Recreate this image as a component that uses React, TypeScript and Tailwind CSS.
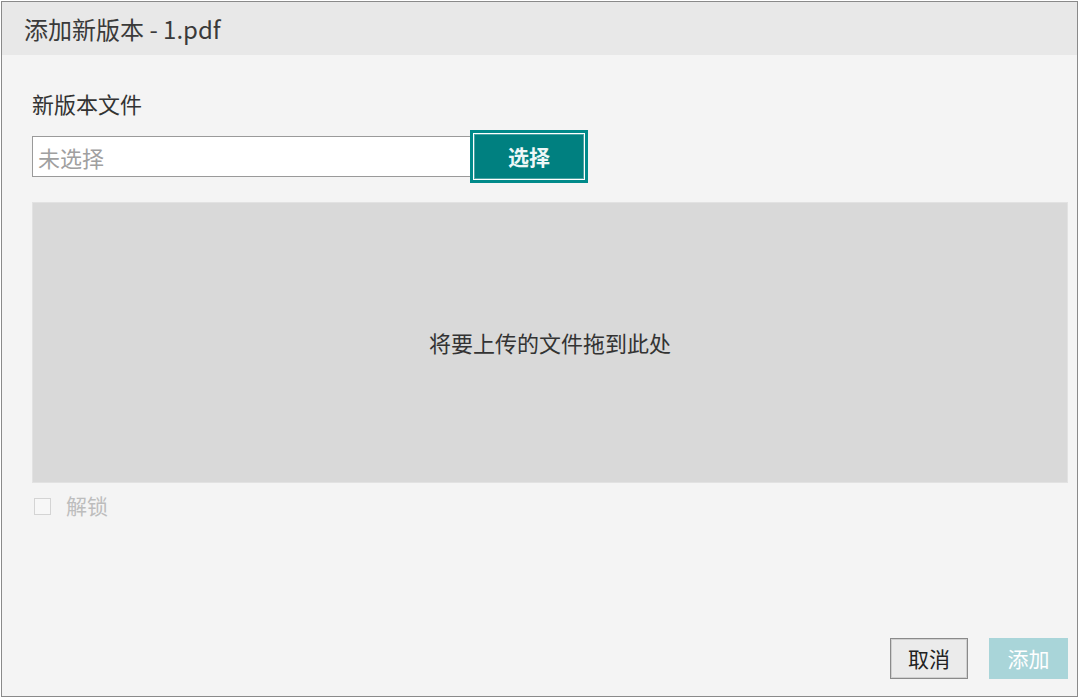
export default function App() {
  return (
    <div className="h-[698px] w-[1079px] bg-white pl-px pt-px font-['Noto_Sans_CJK_SC','Noto_Sans',sans-serif]">
      <div className="flex h-[696px] w-[1077px] flex-col border border-[#8a8a8a] bg-[#f4f4f4]">
        <div className="flex h-[53px] shrink-0 items-center bg-[#e8e8e8] pl-[22px] text-[24px] text-[#3a3a3a]">
          添加新版本 - 1.pdf
        </div>

        <div className="flex flex-1 flex-col pb-[17px] pl-[30px] pr-[9px] pt-[33px]">
          <div className="text-[22px] leading-[30px] text-[#333]">新版本文件</div>

          <div className="mt-[12px] flex h-[53px] items-center">
            <input
              readOnly
              placeholder="未选择"
              className="h-[41px] w-[440px] border border-[#9a9a9a] bg-white px-[5px] text-[22px] text-[#333] outline-none placeholder:text-[#a0a0a0]"
            />
            <button className="-ml-[2px] flex h-[53px] w-[118px] items-center justify-center border-[3px] border-[#008a8a] bg-white p-px">
              <span className="flex h-full w-full items-center justify-center border border-[#4aa3a3] bg-[#008080] text-[21px] font-bold text-[#eef7f7]">
                选择
              </span>
            </button>
          </div>

          <div className="mt-[19px] flex h-[281px] items-center justify-center border border-[#e2e2e2] bg-[#d9d9d9] text-[22px] text-[#333]">
            将要上传的文件拖到此处
          </div>

          <label className="mt-[8px] flex h-[30px] items-center gap-[15px] pl-[2px] text-[21px] text-[#bdbdbd]">
            <span className="h-[17px] w-[17px] border border-[#d4d4d4] bg-[#f7f7f7]" />
            解锁
          </label>

          <div className="mt-auto flex justify-end gap-[21px]">
            <button className="h-[41px] w-[78px] border border-[#8a8a8a] bg-[#ebebeb] text-[21px] text-[#222] shadow-[inset_0_0_0_1px_#d0d0d0]">
              取消
            </button>
            <button className="h-[41px] w-[79px] bg-[#a9d5d9] text-[21px] text-white">添加</button>
          </div>
        </div>
      </div>
    </div>
  )
}
